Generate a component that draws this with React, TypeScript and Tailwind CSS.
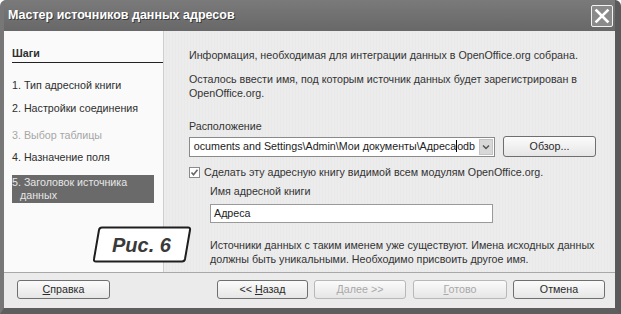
import React from "react";

const font = { fontFamily: '"Liberation Sans", Arial, sans-serif' };

function Btn({ children, disabled, className = "" }: { children: React.ReactNode; disabled?: boolean; className?: string }) {
  return (
    <div
      className={`h-[19px] flex items-center justify-center rounded-[3px] border text-[10.7px] bg-gradient-to-b from-[#fbfbfb] to-[#e6e6e6] ${
        disabled ? "border-[#b8b8b8] text-[#a8a8a8]" : "border-[#6f6f6f] text-[#2a2a2a]"
      } ${className}`}
    >
      {children}
    </div>
  );
}

export default function App() {
  return (
    <div style={font} className="w-[621px] h-[314px] bg-white">
      <div className="relative w-[621px] h-[314px] flex flex-col bg-[#6d6d6d] rounded-t-[6px] overflow-hidden border-r-[6px] border-r-[#5a5a5a] border-b-[6px] border-b-[#5e5e5e] border-l-[4px] border-l-[#777777]">
        {/* Title bar */}
        <div className="h-[31px] shrink-0 flex items-center justify-between pl-[4px] pr-[2px] bg-gradient-to-b from-[#7a7a7a] to-[#686868]">
          <span className="text-white font-bold text-[12.5px] [text-shadow:1px_1px_0_#3a3a3a]">
            Мастер источников данных адресов
          </span>
          <div className="w-[22px] h-[22px] border border-[#f2f2f2] rounded-[2px] bg-[#8a8a8a] flex items-center justify-center">
            <svg width="16" height="16" viewBox="0 0 16 16">
              <path d="M2.5 2.5 L13.5 13.5 M13.5 2.5 L2.5 13.5" stroke="#ffffff" strokeWidth="2.6" strokeLinecap="square" />
            </svg>
          </div>
        </div>

        {/* Body */}
        <div className="flex h-[241px] shrink-0 overflow-hidden bg-[#ebebeb]">
          {/* Left panel */}
          <div className="w-[160px] bg-[#fafafa] border-r border-r-[#cfcfcf] pl-[8px] pt-[16px] flex flex-col text-[10.7px] text-[#2e2e2e]">
            <div className="font-bold h-[12px] leading-[12px]">Шаги</div>
            <div className="h-px bg-[#222] mt-[3px]"></div>
            <div className="mt-[16px] leading-[13px]">1. Тип адресной книги</div>
            <div className="mt-[10px] leading-[13px]">2. Настройки соединения</div>
            <div className="mt-[14px] leading-[13px] text-[#a6a6a6]">3. Выбор таблицы</div>
            <div className="mt-[9px] leading-[13px]">4. Назначение поля</div>
            <div className="mt-[11px] mr-[9px] h-[28px] bg-[#6a6a6a] text-[#e6e6e6] leading-[13px] pt-[1px]">
              <div>5. Заголовок источника</div>
              <div className="pl-[8px]">данных</div>
            </div>
          </div>

          {/* Right panel */}
          <div className="flex-1 pl-[25px] pr-[10px] pt-[18px] text-[10.7px] text-[#333] whitespace-nowrap bg-[repeating-linear-gradient(90deg,#ececec_0px,#ececec_2px,#e6e6e6_3px)]">
            <div className="leading-[13px]">Информация, необходимая для интеграции данных в OpenOffice.org собрана.</div>
            <div className="mt-[10px] leading-[14px]">
              Осталось ввести имя, под которым источник данных будет зарегистрирован в
              <br />
              OpenOffice.org.
            </div>
            <div className="mt-[20px] leading-[13px]">Расположение</div>
            <div className="mt-[3px] flex items-center gap-[8px]">
              <div className="w-[306px] h-[20px] bg-white border border-[#8a8a8a] flex items-center overflow-hidden">
                <div className="flex-1 min-w-0 overflow-hidden whitespace-nowrap flex justify-end pr-[4px] text-[#222]">
                  <span className="shrink-0">
                    ocuments and Settings\Admin\Мои документы\Адреса<span className="border-l border-black"></span>odb
                  </span>
                </div>
                <div className="w-[14px] h-[16px] mr-[1px] shrink-0 bg-[#d8d8d8] border border-[#c4c4c4] flex items-center justify-center">
                  <svg width="8" height="6" viewBox="0 0 8 6">
                    <path d="M1 1.5 L4 4.5 L7 1.5" stroke="#555" strokeWidth="1.5" fill="none" />
                  </svg>
                </div>
              </div>
              <Btn className="w-[93px] h-[21px]">Обзор...</Btn>
            </div>
            <div className="mt-[9px] flex items-center gap-[4px]">
              <div className="w-[11px] h-[11px] border border-[#8a8a8a] bg-white flex items-center justify-center">
                <svg width="9" height="9" viewBox="0 0 9 9">
                  <path d="M1.5 4.5 L3.5 6.8 L7.5 1.8" stroke="#666" strokeWidth="1.6" fill="none" />
                </svg>
              </div>
              <span className="leading-[13px]">Сделать эту адресную книгу видимой всем модулям OpenOffice.org.</span>
            </div>
            <div className="pl-[21px]">
              <div className="mt-[6px] leading-[13px]">Имя адресной книги</div>
              <div className="mt-[6px] w-[283px] h-[19px] bg-white border border-[#9a9a9a] flex items-center pl-[3px] text-[#222]">
                Адреса
              </div>
              <div className="mt-[15px] leading-[14px]">
                Источники данных с таким именем уже существуют. Имена исходных данных
                <br />
                должны быть уникальными. Необходимо присвоить другое имя.
              </div>
            </div>
          </div>
        </div>

        {/* Separator + bottom bar */}
        <div className="h-px shrink-0 bg-[#a8a8a8]"></div>
        <div className="h-[35px] shrink-0 bg-[#ebebeb] flex items-center pl-[13px] pb-[2px]">
          <Btn className="w-[93px]">
            <span><span className="underline">С</span>правка</span>
          </Btn>
          <Btn className="w-[91px] ml-[107px]">
            <span>&lt;&lt; <span className="underline">Н</span>азад</span>
          </Btn>
          <Btn disabled className="w-[92px] ml-[6px]">
            <span><span className="underline">Д</span>алее &gt;&gt;</span>
          </Btn>
          <Btn disabled className="w-[94px] ml-[7px]">
            <span><span className="underline">Г</span>отово</span>
          </Btn>
          <Btn className="w-[92px] ml-[6px]">Отмена</Btn>
        </div>

        {/* Рис. 6 label overlay */}
        <div className="absolute left-[89px] top-[226px] w-[99px] h-[37px]">
          <svg width="99" height="37" viewBox="0 0 99 37" className="absolute inset-0">
            <path d="M9 1.5 H95 Q97.5 1.5 97 4 L92 33 Q91.5 35.5 89 35.5 H3 Q0.5 35.5 1 33 L6 4 Q6.5 1.5 9 1.5 Z" fill="#ffffff" stroke="#1e1e1e" strokeWidth="2" />
          </svg>
          <div className="relative h-full flex items-center justify-center text-[20px] font-bold italic text-[#3a3a3a] pr-[2px]">
            Рис. 6
          </div>
        </div>
      </div>
    </div>
  );
}
